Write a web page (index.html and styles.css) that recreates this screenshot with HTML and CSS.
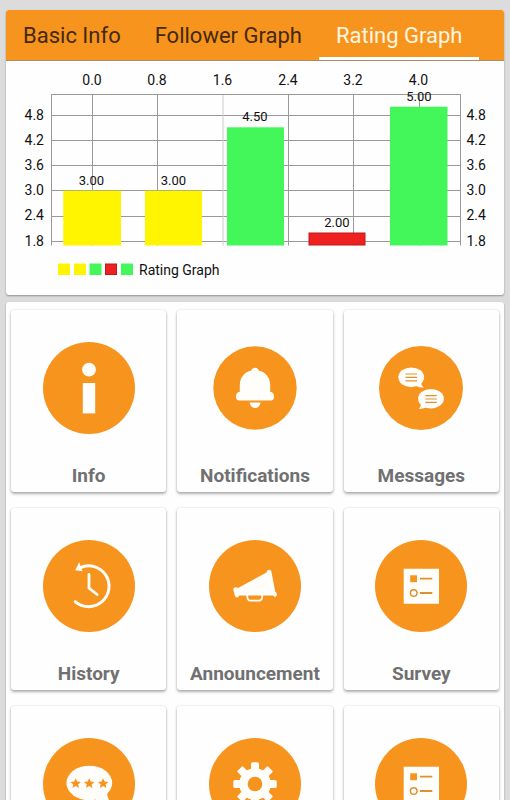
FILE: index.html
```html
<!DOCTYPE html>
<html lang="en">
<head>
<meta charset="utf-8">
<meta name="viewport" content="width=device-width, initial-scale=1">
<title>Rating Graph</title>
<link rel="stylesheet" href="styles.css">
</head>
<body>
<main class="page">
  <section class="card">
    <nav class="tabs">
      <button class="tab" type="button">Basic Info</button>
      <button class="tab" type="button">Follower Graph</button>
      <button class="tab tab-active" type="button">Rating Graph</button>
    </nav>
    <svg class="chart" viewBox="6 61 498 234">
      <g class="grid">
        <path d="M51.500 94.500H460.500M51.500 115.500H460.500M51.500 140.500H460.500M51.500 165.500H460.500M51.500 190.500H460.500M51.500 216.500H460.500M51.500 241.500H460.500"/>
        <path d="M51.500 94V245.500M92.500 94V245.500M157.500 94V245.500M288.500 94V245.500M353.500 94V245.500M419.500 94V245.500M460.500 94V245.500"/>
        <path class="grid-soft" d="M223 95V245.500"/>
      </g>
      <rect class="yellow" x="63.300" y="190.700" width="57.700" height="54.800"/>
      <rect class="yellow" x="145" y="190.700" width="57" height="54.800"/>
      <rect class="green" x="227" y="127.300" width="57" height="118.200"/>
      <rect class="red red-bar" x="309" y="233" width="56" height="12"/>
      <rect class="green" x="390" y="106.700" width="57.500" height="138.800"/>
      <g class="axis axis-top">
        <text x="92" y="85">0.0</text><text x="157" y="85">0.8</text><text x="222.500" y="85">1.6</text>
        <text x="288" y="85">2.4</text><text x="353" y="85">3.2</text><text x="418.500" y="85">4.0</text>
      </g>
      <g class="axis axis-left">
        <text x="44" y="120">4.8</text><text x="44" y="145">4.2</text><text x="44" y="170">3.6</text>
        <text x="44" y="195">3.0</text><text x="44" y="220">2.4</text><text x="44" y="246">1.8</text>
      </g>
      <g class="axis">
        <text x="466.500" y="120">4.8</text><text x="466.500" y="145">4.2</text><text x="466.500" y="170">3.6</text>
        <text x="466.500" y="195">3.0</text><text x="466.500" y="220">2.4</text><text x="466.500" y="246">1.8</text>
      </g>
      <g class="values">
        <text x="91.500" y="185">3.00</text><text x="173.500" y="185">3.00</text><text x="255" y="121">4.50</text>
        <text x="337" y="227">2.00</text><text x="419" y="101">5.00</text>
      </g>
      <rect class="yellow" x="58" y="263.500" width="12" height="11.500"/>
      <rect class="yellow" x="74" y="263.500" width="12" height="11.500"/>
      <rect class="green" x="89.500" y="263.500" width="12" height="11.500"/>
      <rect class="red red-bar" x="105.500" y="264" width="11" height="10.500"/>
      <rect class="green" x="121" y="263.500" width="12" height="11.500"/>
      <text class="axis" x="139" y="275">Rating Graph</text>
    </svg>
  </section>

  <section class="card tiles">
    <button class="tile" type="button">
      <svg class="icon" viewBox="0 0 92 92">
        <circle class="disc" cx="46" cy="46" r="46"/>
        <circle class="w" cx="46" cy="27.700" r="6.900"/><path class="w" d="M39.800 41h12.400v30.400H39.800z"/>
      </svg>
      <span class="label">Info</span>
    </button>
    <button class="tile" type="button">
      <svg class="icon" viewBox="0 0 92 92">
        <circle class="disc" cx="46" cy="46" r="41.700"/>
        <path class="w" d="M42.300 28.500C42.800 26.800 44.200 25.800 46 25.800S49.200 26.800 49.700 28.500C56.500 30 61 35.500 61.200 42.500V49.700Q65 50.300 65 54.200Q65 58.600 62 58.600H30Q27 58.600 27 54.200Q27 50.300 30.800 49.700V42.500C31 35.500 35.500 30 42.300 28.500z"/>
        <path class="w" d="M40.600 60.400H51.600C50.800 64 48.700 66 46.100 66S41.400 64 40.600 60.400z"/>
      </svg>
      <span class="label">Notifications</span>
    </button>
    <button class="tile" type="button">
      <svg class="icon" viewBox="0 0 92 92">
        <circle class="disc" cx="46" cy="46" r="42"/>
        <ellipse class="w" cx="36.200" cy="35.300" rx="12.900" ry="9.900"/>
        <path class="w" d="M46 39.500C46 42 47 44 48.800 45.600C45.500 45.600 42.500 45 39.500 43z"/>
        <ellipse class="w" cx="56" cy="56.700" rx="12.900" ry="9.700"/>
        <path class="w" d="M46 60.500C46.200 63 45.500 65 43.800 66.900C47.500 66.700 50 66 53 64.500z"/>
        <path class="o-line" d="M30.500 32H42M30.500 35.400H42M30.500 38.800H42M50.300 53.600H61.800M50.300 57H61.800M50.300 60.400H61.800" stroke-width="1.200"/>
      </svg>
      <span class="label">Messages</span>
    </button>
    <button class="tile" type="button">
      <svg class="icon" viewBox="0 0 92 92">
        <circle class="disc" cx="46" cy="46" r="46"/>
        <path class="w-line" d="M37 27.800A20.400 20.400 0 1 1 32.200 61.600" stroke-width="3"/>
        <path class="w" d="M36.200 22.200L32.200 30.300L39.500 31.300z"/>
        <path class="w-line" d="M46 34.500V48.200L54.200 54.500" stroke-width="2.800"/>
      </svg>
      <span class="label">History</span>
    </button>
    <button class="tile" type="button">
      <svg class="icon" viewBox="0 0 92 92">
        <circle class="disc" cx="46" cy="46" r="46"/>
        <path class="w" d="M24.300 49.500C24.300 47.300 27 46.800 29 48L57.600 32.500C57.300 29.500 61 28.700 62.300 31.200L66.300 51.800C68.800 53.500 68.300 56.500 65.500 57L64.300 55.600H30.200C29.800 57.800 26.500 58.200 25.800 55.500z"/>
        <path class="w-line" d="M38.200 55.500C38.200 59 39.300 60.700 41.500 60.700H50C52.200 60.700 53.300 59 53.300 55.500" stroke-width="1.800"/>
      </svg>
      <span class="label">Announcement</span>
    </button>
    <button class="tile" type="button">
      <svg class="icon" viewBox="0 0 92 92">
        <circle class="disc" cx="46" cy="46" r="46"/>
        <path class="w" d="M28.700 28.700H64V63.700H28.700z"/>
        <path class="disc" d="M35.200 35.300H42V42.200H35.200z"/>
        <path class="o-line" d="M45 38.700H57.300M45 53H57.300" stroke-width="1.800"/>
        <circle class="o-line" cx="38.700" cy="53" r="3.300" stroke-width="1.500"/>
      </svg>
      <span class="label">Survey</span>
    </button>
    <button class="tile" type="button">
      <svg class="icon" viewBox="0 0 92 92">
        <circle class="disc" cx="46" cy="46" r="46"/>
        <ellipse class="w" cx="46.300" cy="45" rx="22.900" ry="17.200"/>
        <path class="w" d="M64 54C64 59 66 63 69 66C63 66 56 64 51 60z"/>
        <path id="star" class="disc" d="M32.700 40.200L34.200 43.600L37.900 44L35.100 46.400L36 50L32.700 48.100L29.400 50L30.300 46.400L27.500 44L31.200 43.600z"/>
        <use href="#star" x="13.500"/><use href="#star" x="27.400"/>
      </svg>
    </button>
    <button class="tile" type="button">
      <svg class="icon" viewBox="0 0 92 92">
        <circle class="disc" cx="46" cy="46" r="46"/>
        <circle class="w" cx="46" cy="46" r="15.800"/>
        <g class="w">
          <rect id="tooth" x="42" y="24.300" width="8" height="43.400" rx="1.500"/>
          <use href="#tooth" transform="rotate(45 46 46)"/><use href="#tooth" transform="rotate(90 46 46)"/><use href="#tooth" transform="rotate(135 46 46)"/>
        </g>
        <circle class="disc" cx="46" cy="46" r="7.300"/>
      </svg>
    </button>
    <button class="tile" type="button">
      <svg class="icon" viewBox="0 0 92 92">
        <circle class="disc" cx="46" cy="46" r="46"/>
        <path class="w" d="M28.700 28.700H64V63.700H28.700z"/>
        <path class="disc" d="M35.200 35.300H42V42.200H35.200z"/>
        <path class="o-line" d="M45 38.700H57.300M45 53H57.300" stroke-width="1.800"/>
        <circle class="o-line" cx="38.700" cy="53" r="3.300" stroke-width="1.500"/>
      </svg>
    </button>
  </section>
</main>
</body>
</html>
```
FILE: styles.css
```css
* { box-sizing: border-box; }

html { scrollbar-width: none; }

body {
  margin: 0;
  background: #dcdcdc;
  font-family: Roboto, "Liberation Sans", sans-serif;
}

.page {
  display: flex;
  flex-direction: column;
  gap: 7px;
  padding: 10px 6px;
}

.card {
  background: #fefefe;
  border-radius: 3px;
  box-shadow: 0 1px 2px rgba(0, 0, 0, 0.35);
}

.tabs {
  display: flex;
  height: 51px;
  background: #f7941e;
  border-bottom: 1px solid #b08a60;
  border-radius: 3px 3px 0 0;
}

.tab {
  padding: 4px 17px 0;
  border: 0;
  border-bottom: 3px solid transparent;
  background: none;
  color: #45290c;
  font: 22px/26px Roboto, "Liberation Sans", sans-serif;
  white-space: nowrap;
}

.tab-active {
  border-bottom-color: #fff;
  color: #fff6e0;
}

.chart {
  display: block;
  width: 100%;
}

.grid path { fill: none; stroke: #999; stroke-width: 1; }
.grid .grid-soft { stroke: #ccc; }

.yellow { fill: #fff500; }
.green { fill: #43f75a; }
.red { fill: #ef2020; }
.red-bar { stroke: #b81c1c; stroke-width: 1; }

.axis { font-size: 14px; fill: #111; }
.axis-top { text-anchor: middle; }
.axis-left { text-anchor: end; }
.values { font-size: 13px; fill: #111; text-anchor: middle; }

.tiles {
  display: grid;
  grid-template-columns: repeat(3, 1fr);
  gap: 16px 11px;
  padding: 8px 5px;
}

.tile {
  display: flex;
  flex-direction: column;
  align-items: center;
  gap: 30px;
  min-width: 0;
  min-height: 182px;
  padding: 32px 0 4px;
  border: 0;
  border-radius: 3px;
  background: #fefefe;
  box-shadow: 0 2px 3px rgba(0, 0, 0, 0.3), 0 0 2px rgba(0, 0, 0, 0.15);
  font-family: inherit;
}

.icon {
  width: 92px;
  height: 92px;
}

.label {
  color: #707070;
  font-size: 19px;
  font-weight: 700;
  line-height: 24px;
}

.disc { fill: #f7941e; }
.w { fill: #fffefa; }
.w-line { fill: none; stroke: #fffefa; stroke-linecap: round; stroke-linejoin: round; }
.o-line { fill: none; stroke: #e0912f; }
```
